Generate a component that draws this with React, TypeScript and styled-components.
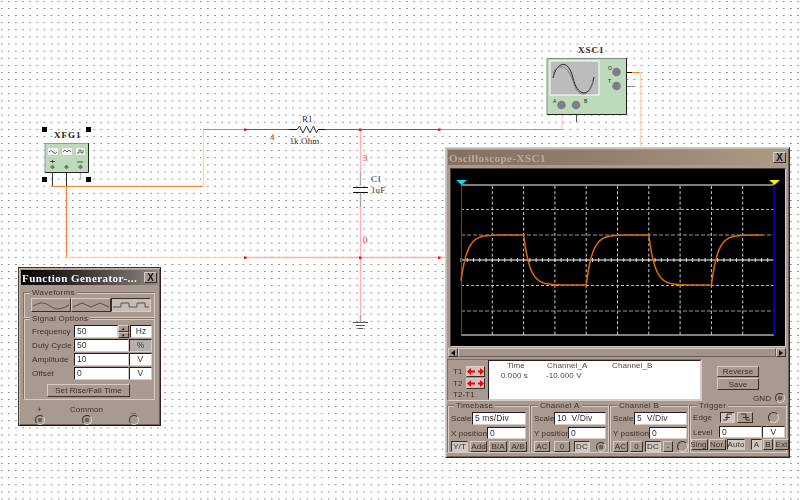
import React from "react";
import styled, { createGlobalStyle } from "styled-components";

const Global = createGlobalStyle`
  html, body { margin: 0; padding: 0; background: #fff; overflow: hidden; }
  * { box-sizing: border-box; }
`;

const PANEL = "#a89a91";
const LIGHT = "#d6ccc5";
const DARK = "#3c2c26";
const SANS = `"Liberation Sans", Arial, sans-serif`;
const SERIF = `"Liberation Serif", "Times New Roman", serif`;

const Stage = styled.div`
  position: relative;
  width: 800px;
  height: 500px;
  overflow: hidden;
  background-color: #fff;
  background-image: radial-gradient(circle at 1.6px 1.4px, #777 0, #888 0.6px, transparent 0.9px);
  background-size: 7.11px 7.11px;
  font-family: ${SANS};
  font-size: 8px;
  letter-spacing: 0.1px;
  color: #3a302c;
`;

const Circuit = styled.svg`
  position: absolute;
  inset: 0;
  width: 800px;
  height: 500px;
`;

const Window = styled.div<{ $x: number; $y: number; $w: number; $h: number; $active?: boolean }>`
  position: absolute;
  left: ${(p) => p.$x}px;
  top: ${(p) => p.$y}px;
  width: ${(p) => p.$w}px;
  height: ${(p) => p.$h}px;
  background: ${PANEL};
  border: 1px solid;
  border-color: ${(p) => (p.$active ? "#3a2e2a #2c2220 #1c1210 #4a3c36" : `${LIGHT} #2c2220 #2c2220 ${LIGHT}`)};
  box-shadow: inset 1px 1px 0 #c4b8b0, inset -1px -1px 0 #6e5f58;
  padding: 2px;
  display: flex;
  flex-direction: column;
  filter: blur(0.25px);
`;

const TitleBar = styled.div<{ $active?: boolean }>`
  height: 15px;
  flex: none;
  display: flex;
  align-items: center;
  justify-content: space-between;
  padding: 0 1px 0 1px;
  font-family: ${SERIF};
  font-weight: bold;
  white-space: nowrap;
  background: ${(p) =>
    p.$active
      ? "linear-gradient(90deg, #000 0%, #3a3432 45%, #8d8582 100%)"
      : "linear-gradient(90deg, #85705f 0%, #94806f 50%, #ab9c84 100%)"};
  color: ${(p) => (p.$active ? "#fff" : "#b8aca0")};
  font-size: 11px;
  letter-spacing: 0.45px;
`;

const CloseButton = styled.div`
  width: 13px;
  height: 11px;
  background: ${PANEL};
  border: 1px solid;
  border-color: ${LIGHT} ${DARK} ${DARK} ${LIGHT};
  color: #111;
  font: bold 10px/9px ${SANS};
  letter-spacing: 0;
  text-align: center;
`;

/* ---- shared controls ---- */
const Group = styled.div<{ $w?: number; $h?: number; $top?: number }>`
  position: relative;
  width: ${(p) => (p.$w ? `${p.$w}px` : "auto")};
  height: ${(p) => (p.$h ? `${p.$h}px` : "auto")};
  margin-top: ${(p) => p.$top ?? 0}px;
  flex: none;
  border: 1px solid;
  border-color: #7e7068 ${LIGHT} ${LIGHT} #7e7068;
  box-shadow: inset 1px 1px 0 ${LIGHT};
`;

const Legend = styled.span<{ $x?: number }>`
  position: absolute;
  left: ${(p) => p.$x ?? 8}px;
  top: -5px;
  padding: 0 2px;
  background: ${PANEL};
  line-height: 9px;
  white-space: nowrap;
  letter-spacing: 0.3px;
`;

const Row = styled.div<{ $gap?: number; $top?: number; $left?: number }>`
  display: flex;
  align-items: center;
  gap: ${(p) => p.$gap ?? 0}px;
  margin-top: ${(p) => p.$top ?? 0}px;
  margin-left: ${(p) => p.$left ?? 0}px;
`;

const Label = styled.span<{ $w?: number }>`
  width: ${(p) => (p.$w ? `${p.$w}px` : "auto")};
  flex: none;
  white-space: nowrap;
`;

const Field = styled.div<{ $w: number; $h?: number; $center?: boolean; $grey?: boolean }>`
  width: ${(p) => p.$w}px;
  height: ${(p) => p.$h ?? 13}px;
  flex: none;
  background: ${(p) => (p.$grey ? "#b4b0ae" : "#fff")};
  border: 1px solid;
  border-color: #2e1c1a #d6ccc5 #d6ccc5 #2e1c1a;
  padding: 0 2px;
  line-height: ${(p) => (p.$h ?? 13) - 2}px;
  font-size: 8.5px;
  color: #3a3230;
  white-space: pre;
  text-align: ${(p) => (p.$center ? "center" : "left")};
`;

const Btn = styled.div<{ $w: number; $h?: number; $on?: boolean }>`
  width: ${(p) => p.$w}px;
  height: ${(p) => p.$h ?? 11}px;
  flex: none;
  display: flex;
  align-items: center;
  justify-content: center;
  white-space: nowrap;
  font-size: 8px;
  background: ${(p) => (p.$on ? "#cfc8c2" : PANEL)};
  border: 1px solid;
  border-color: ${(p) =>
    p.$on ? `${DARK} ${LIGHT} ${LIGHT} ${DARK}` : `${LIGHT} ${DARK} ${DARK} ${LIGHT}`};
`;

const Terminal = styled.div<{ $filled?: boolean; $size?: number }>`
  width: ${(p) => p.$size ?? 10}px;
  height: ${(p) => p.$size ?? 10}px;
  flex: none;
  border-radius: 50%;
  border: 1px solid;
  border-color: #3a2e2a #ddd6d0 #ddd6d0 #3a2e2a;
  background: ${(p) =>
    p.$filled ? `radial-gradient(circle, #6e5f58 0 2px, #a89a91 2.5px)` : PANEL};
`;

/* ---- function generator ---- */
const FgBody = styled.div`
  flex: 1;
  padding: 7px 2px 0 2px;
  display: flex;
  flex-direction: column;
`;

const WaveButton = styled.div<{ $on?: boolean }>`
  width: 40px;
  height: 14px;
  flex: none;
  background: ${(p) => (p.$on ? "#c6bdb6" : PANEL)};
  border: 1px solid;
  border-color: ${(p) =>
    p.$on ? `${DARK} ${LIGHT} ${LIGHT} ${DARK}` : `${LIGHT} ${DARK} ${DARK} ${LIGHT}`};
  svg { display: block; }
`;

const Spinner = styled.div`
  width: 11px;
  height: 13px;
  flex: none;
  display: flex;
  flex-direction: column;
`;

const SpinPart = styled.div`
  flex: 1;
  background: ${PANEL};
  border: 1px solid;
  border-color: ${LIGHT} ${DARK} ${DARK} ${LIGHT};
  font-size: 5px;
  line-height: 4px;
  text-align: center;
  color: #111;
`;

const UnitGap = styled.div`
  margin-left: 1px;
  display: flex;
`;

const TerminalRow = styled.div`
  display: grid;
  grid-template-columns: 47px 47px 47px;
  justify-items: center;
  margin-top: 5px;
  margin-left: -7px;
  row-gap: 1px;
`;

/* ---- scope ---- */
const ScreenFrame = styled.div`
  margin: 3px 1px 0 2px;
  height: 179px;
  flex: none;
  border: 1px solid;
  border-color: #4e403a #d6ccc5 #d6ccc5 #4e403a;
  background: #000;
  svg { display: block; }
`;

const ScrollBar = styled.div`
  margin: 1px 1px 0 0;
  height: 9px;
  flex: none;
  display: flex;
  background: #b4a8a0;
`;

const ScrollArrow = styled.div`
  width: 10px;
  flex: none;
  background: ${PANEL};
  border: 1px solid;
  border-color: ${LIGHT} ${DARK} ${DARK} ${LIGHT};
  display: flex;
  align-items: center;
  justify-content: center;
`;

const ScrollThumb = styled.div`
  flex: 1;
  background: #a2948b;
  border: 1px solid;
  border-color: ${LIGHT} #6e5f58 #6e5f58 ${LIGHT};
`;

const ReadoutRow = styled.div`
  margin: 2px 0 0 -1px;
  flex: none;
  height: 44px;
  display: flex;
`;

const ReadoutFrame = styled.div`
  width: 255px;
  height: 42px;
  flex: none;
  display: flex;
  border: 1px solid;
  border-color: #7e7068 ${LIGHT} ${LIGHT} #7e7068;
`;

const CursorColumn = styled.div`
  width: 40px;
  flex: none;
  display: flex;
  flex-direction: column;
  padding: 6px 0 0 5px;
  gap: 1px;
`;

const ArrowButton = styled.div`
  width: 19px;
  height: 11px;
  flex: none;
  background: #cfc5be;
  border: 1px solid;
  border-color: ${LIGHT} ${DARK} ${DARK} ${LIGHT};
  svg { display: block; }
`;

const Readout = styled.div`
  flex: 1;
  background: #fff;
  border: 1px solid;
  border-color: #2e1c1a #d6ccc5 #d6ccc5 #2e1c1a;
  display: grid;
  grid-template-columns: 57px 65px 1fr;
  grid-auto-rows: 9.5px;
  line-height: 9px;
  color: #504642;
`;

const ReadoutCell = styled.span<{ $pad: number }>`
  padding-left: ${(p) => p.$pad}px;
  white-space: nowrap;
`;

const ActionColumn = styled.div`
  flex: 1;
  display: flex;
  flex-direction: column;
  padding: 7px 0 0 15px;
  gap: 1px;
`;

const GndRow = styled.div`
  display: flex;
  align-items: center;
  gap: 4px;
  margin-top: 2px;
  padding-left: 36px;
`;

const ControlRow = styled.div`
  margin: 2px 0 0 -1px;
  flex: 1;
  display: flex;
`;

const GroupBody = styled.div`
  display: flex;
  flex-direction: column;
  padding: 6px 2px 0 3px;
`;

function seg(x0: number, x1: number, from: number, target: number) {
  const pts: string[] = [];
  for (let x = x0; x <= x1 + 0.001; x += 1.5) {
    const y = target + (from - target) * Math.exp(-(x - x0) / 6.26);
    pts.push(`${x.toFixed(1)} ${y.toFixed(1)}`);
  }
  return pts;
}

function tracePath() {
  const cuts = [461, 523.6, 586.2, 648.8, 711.4, 763];
  let y = 281;
  let out: string[] = [];
  cuts.slice(0, -1).forEach((c, i) => {
    const target = i % 2 === 0 ? 235 : 285;
    const pts = seg(c, cuts[i + 1], y, target);
    out = out.concat(pts);
    y = target;
  });
  return "M" + out.join("L");
}

const ScopeGrid = () => {
  const xs = Array.from({ length: 9 }, (_, i) => 492.3 + i * 31.3);
  const ticks = Array.from({ length: 50 }, (_, i) => 461 + i * 6.26);
  return (
    <svg width={333} height={177} viewBox="451 169 333 177">
      {xs.map((x) => (
        <line key={x} x1={x} x2={x} y1={186} y2={335} stroke="#cfcfcf" strokeDasharray="3 2.2" />
      ))}
      <line x1={461} x2={774} y1={209.5} y2={209.5} stroke="#a8a8a8" strokeDasharray="3 2" />
      <line x1={461} x2={774} y1={235} y2={235} stroke="#999" strokeDasharray="4 2" />
      <line x1={461} x2={774} y1={285.5} y2={285.5} stroke="#bbb" strokeDasharray="3 2" />
      <line x1={461} x2={774} y1={311} y2={311} stroke="#999" strokeDasharray="4 2" />
      <line x1={461} x2={774} y1={185} y2={185} stroke="#a8a8a8" strokeWidth={1.5} />
      <line x1={461} x2={774} y1={335} y2={335} stroke="#fff" strokeWidth={1.2} />
      <line x1={461} x2={774} y1={260} y2={260} stroke="#fff" strokeWidth={1.2} />
      {ticks.map((x) => (
        <line key={x} x1={x} x2={x} y1={258} y2={262} stroke="#ddd" />
      ))}
      <line x1={461.5} x2={461.5} y1={185} y2={335} stroke="#e01010" />
      <line x1={774} x2={774} y1={185} y2={335} stroke="#0000d0" strokeWidth={1.6} />
      <line x1={461.5} x2={461.5} y1={280} y2={285} stroke="#109010" />
      <polygon points="456,180 467,180 461.5,185" fill="#00e0f0" />
      <polygon points="769,180 780,180 774.5,185" fill="#f0f000" />
      <path d={tracePath()} fill="none" stroke="#dc6c00" strokeWidth={1.5} />
    </svg>
  );
};

const Arrows = () => (
  <svg width={17} height={9} viewBox="0 0 17 9">
    <path d="M2 4.5H8M11 4.5H15" stroke="#f00000" strokeWidth={2} fill="none" />
    <polygon points="0,4.5 4,1 4,8" fill="#f00000" />
    <polygon points="17,4.5 13,1 13,8" fill="#f00000" />
  </svg>
);

const Wave = ({ d }: { d: string }) => (
  <svg width={38} height={12} viewBox="0 0 38 12">
    <path d={d} fill="none" stroke="#5a4e4a" />
  </svg>
);

const CircuitDrawing = () => {
  const pale = "#ffd0c2";
  const orange = "#f88030";
  const pink = "#ffb0b0";
  const red = "#f02020";
  const handles: [number, number][] = [[44, 129], [88, 129], [44, 179], [88, 179]];
  const nodes: [number, number][] = [[245, 129], [360, 129], [439, 129], [245, 257], [360, 257], [439, 257]];
  return (
    <Circuit viewBox="0 0 800 500">
      {/* wires */}
      <path d="M52.5 186.5H203" stroke={orange} fill="none" />
      <path d="M203.5 186V129" stroke={pale} fill="none" strokeWidth={1.4} />
      <path d="M203 129.5H245M439 129.5H562" stroke={orange} fill="none" />
      <path d="M245 129.5H289M325 129.5H439" stroke={red} fill="none" />
      <path d="M562 129V111" stroke={pale} fill="none" strokeWidth={1.4} />
      <path d="M562 111V104" stroke="#999" fill="none" />
      <path d="M576.5 110V122" stroke="#555" fill="none" />
      <path d="M622 72.5H632" stroke="#111" fill="none" />
      <path d="M632 72.5H641" stroke={orange} fill="none" />
      <path d="M640.5 72V148" stroke={pale} fill="none" strokeWidth={1.4} />
      <path d="M622 86.5H634" stroke="#888" fill="none" />
      <path d="M52.5 172V186" stroke="#333" fill="none" />
      <path d="M66.5 172V186" stroke="#333" fill="none" />
      <path d="M66.5 186V257" stroke={orange} fill="none" />
      <path d="M80.5 172V180" stroke="#bbb" fill="none" strokeWidth={1.4} />
      <path d="M66 257.5H245" stroke={pale} fill="none" strokeWidth={1.4} />
      <path d="M245 257.5H445" stroke={pink} fill="none" strokeWidth={1.4} />
      <path d="M360.5 129V172M360.5 207V315" stroke={pink} fill="none" strokeWidth={1.4} />
      <path d="M360.5 172V186M360.5 193V207M360.5 315V322" stroke="#a8a8a8" fill="none" strokeWidth={1.4} />
      {/* capacitor */}
      <path d="M353 187.5H368M353 192.5H368" stroke="#111" fill="none" strokeWidth={1.2} />
      {/* ground */}
      <path d="M353 322.5H368M356 325.5H365M358 328.5H363" stroke="#555" fill="none" />
      {/* resistor */}
      <path d="M289 129.5H297" stroke="#111" fill="none" />
      <path d="M318 129.5H325" stroke="#111" fill="none" />
      <path d="M297 129.5L299.5 126L303 133L306.5 126L310 133L313.5 126L316.5 133L318 129.5" stroke="#333" fill="none" />
      {nodes.map(([x, y]) => (
        <rect key={`${x}-${y}`} x={x - 1} y={y - 0.5} width={2.5} height={2.5} fill="#f01818" />
      ))}
      {/* labels */}
      <g fontFamily={SERIF} fontSize={9} fill="#333">
        <text x={302} y={122}>R1</text>
        <text x={289.5} y={144} letterSpacing={0.1}>1k Ohm</text>
        <text x={371} y={182}>C1</text>
        <text x={371} y={193}>1uF</text>
      </g>
      <g fontFamily={SERIF} fontSize={9} fill="#f01818">
        <text x={270} y={140}>4</text>
        <text x={363} y={161}>3</text>
        <text x={363} y={243}>0</text>
      </g>
      <g fontFamily={SERIF} fontSize={9} fontWeight="bold" fill="#222" letterSpacing={1}>
        <text x={54} y={138}>XFG1</text>
        <text x={578} y={53}>XSC1</text>
      </g>
      {/* XFG1 instrument */}
      {handles.map(([x, y]) => (
        <rect key={`${x}-${y}`} x={x - 2} y={y - 2} width={5} height={5} fill="#000" />
      ))}
      <rect x={45} y={143} width={43} height={29} fill="#bddabb" />
      <path d="M45 172.5V143.5H88" stroke="#999" fill="none" />
      <path d="M45 172.5H88.5V143" stroke="#222" fill="none" />
      <rect x={48} y={148} width={10} height={7} fill="#f4f4f4" />
      <rect x={62} y={148} width={10} height={7} fill="#f4f4f4" />
      <rect x={76} y={148} width={9} height={7} fill="#f4f4f4" />
      <path d="M49 152q2 -3 4 0t4 0M63 152l2 -2l2 2l2 -2l2 2M77 153h2v-3h2v3h2v-3" fill="none" stroke="#444" strokeWidth={0.8} />
      <path d="M50 161.5H55M52.5 160V163M77 162H83" stroke="#333" fill="none" strokeWidth={0.8} />
      {[52.5, 66.5, 80.5].map((x) => (
        <polygon key={x} points={`${x - 2.5},167 ${x},164.5 ${x + 2.5},167 ${x},169.5`} fill="#777" />
      ))}
      {/* XSC1 instrument */}
      <rect x={547} y={58} width={79} height={56} fill="#bddabb" />
      <path d="M547 114.5V58.5H626" stroke="#888" fill="none" />
      <path d="M547 114.5H626.5V58" stroke="#222" fill="none" />
      <rect x={550} y={61} width={49} height={34} fill="#bcbcbc" stroke="#fff" />
      <path d="M553 78C556 63 568 57 573 78C577 96 590 100 594 77" fill="none" stroke="#222" />
      <path d="M553 73C556 66 567 60 574 84C579 99 590 97 593 80" fill="none" stroke="#777" />
      {[[561.5, 105], [576, 105], [616.5, 72], [616.5, 86]].map(([x, y]) => (
        <circle key={x + y} cx={x} cy={y} r={4.3} fill="#7e7e88" />
      ))}
      <g fontFamily={SANS} fontSize={5} fill="#222">
        <text x={553} y={103}>A</text>
        <text x={584} y={103}>B</text>
        <text x={608} y={70}>O</text>
        <text x={608} y={83}>T</text>
      </g>
    </Circuit>
  );
};

const FunctionGenerator = () => (
  <Window $x={18} $y={267} $w={143} $h={159} $active>
    <TitleBar $active>
      <span>Function Generator-...</span>
      <CloseButton>X</CloseButton>
    </TitleBar>
    <FgBody>
      <Group $w={132} $h={26}>
        <Legend $x={6}>Waveforms</Legend>
        <Row $left={7} $top={5}>
          <WaveButton><Wave d="M1 7C8 3 12 3 18 7C24 11 28 11 37 6" /></WaveButton>
          <WaveButton><Wave d="M1 8L10 4L19 8L28 4L37 8" /></WaveButton>
          <WaveButton $on><Wave d="M1 8H9V4H17V8H25V4H33V8H37" /></WaveButton>
        </Row>
      </Group>
      <Group $w={132} $h={82}>
        <Legend $x={6}>Signal Options</Legend>
        <Row $left={8} $top={6}>
          <Label $w={42}>Frequency</Label>
          <Field $w={44}>50</Field>
          <Spinner><SpinPart>▴</SpinPart><SpinPart>▾</SpinPart></Spinner>
          <UnitGap><Field $w={22} $center>Hz</Field></UnitGap>
        </Row>
        <Row $left={8} $top={1}>
          <Label $w={42}>Duty Cycle</Label>
          <Field $w={55}>50</Field>
          <Field $w={23} $center $grey>%</Field>
        </Row>
        <Row $left={8} $top={1}>
          <Label $w={42}>Amplitude</Label>
          <Field $w={55}>10</Field>
          <Field $w={23} $center>V</Field>
        </Row>
        <Row $left={8} $top={1}>
          <Label $w={42}>Offset</Label>
          <Field $w={55}>0</Field>
          <Field $w={23} $center>V</Field>
        </Row>
        <Row $left={23} $top={4}>
          <Btn $w={83} $h={13}>Set Rise/Fall Time</Btn>
        </Row>
      </Group>
      <TerminalRow>
        <Label>+</Label>
        <Label>Common</Label>
        <Label>_</Label>
        <Terminal $filled />
        <Terminal $filled />
        <Terminal />
      </TerminalRow>
    </FgBody>
  </Window>
);

const Scope = () => (
  <Window $x={445} $y={147} $w={345} $h={311}>
    <TitleBar>
      <span>Oscilloscope-XSC1</span>
      <CloseButton>X</CloseButton>
    </TitleBar>
    <ScreenFrame><ScopeGrid /></ScreenFrame>
    <ScrollBar>
      <ScrollArrow>
        <svg width={4} height={6}><polygon points="4,0 4,6 0,3" fill="#111" /></svg>
      </ScrollArrow>
      <ScrollThumb />
      <ScrollArrow>
        <svg width={4} height={6}><polygon points="0,0 0,6 4,3" fill="#111" /></svg>
      </ScrollArrow>
    </ScrollBar>
    <ReadoutRow>
      <ReadoutFrame>
        <CursorColumn>
          <Row $gap={2}><Label $w={11}>T1</Label><ArrowButton><Arrows /></ArrowButton></Row>
          <Row $gap={2}><Label $w={11}>T2</Label><ArrowButton><Arrows /></ArrowButton></Row>
          <Label>T2-T1</Label>
        </CursorColumn>
        <Readout>
          <ReadoutCell $pad={18}>Time</ReadoutCell>
          <ReadoutCell $pad={1}>Channel_A</ReadoutCell>
          <ReadoutCell $pad={1}>Channel_B</ReadoutCell>
          <ReadoutCell $pad={12}>0.000 s</ReadoutCell>
          <ReadoutCell $pad={0}>-10.000 V</ReadoutCell>
          <span />
        </Readout>
      </ReadoutFrame>
      <ActionColumn>
        <Btn $w={42} $h={11}>Reverse</Btn>
        <Btn $w={42} $h={12}>Save</Btn>
        <GndRow><Label>GND</Label><Terminal $filled /></GndRow>
      </ActionColumn>
    </ReadoutRow>
    <ControlRow>
      <Group $w={83} $h={48}>
        <Legend $x={6}>Timebase</Legend>
        <GroupBody>
          <Row $gap={1}><Label $w={20}>Scale</Label><Field $w={54} $h={13}>5 ms/Div</Field></Row>
          <Row $gap={1} $top={2}><Label $w={35}>X position</Label><Field $w={39} $h={12}>0</Field></Row>
          <Row $gap={2} $top={2}>
            <Btn $w={17} $on>Y/T</Btn><Btn $w={17}>Add</Btn><Btn $w={18}>B/A</Btn><Btn $w={18}>A/B</Btn>
          </Row>
        </GroupBody>
      </Group>
      <Group $w={79} $h={48}>
        <Legend $x={7}>Channel A</Legend>
        <GroupBody>
          <Row $gap={1}><Label $w={19}>Scale</Label><Field $w={52} $h={13}>10  V/Div</Field></Row>
          <Row $gap={1} $top={2}><Label $w={33}>Y position</Label><Field $w={38} $h={12}>0</Field></Row>
          <Row $gap={4} $top={2}>
            <Btn $w={16}>AC</Btn><Btn $w={16}>0</Btn><Btn $w={16} $on>DC</Btn><Terminal $filled $size={10} style={{ marginLeft: 2 }} />
          </Row>
        </GroupBody>
      </Group>
      <Group $w={80} $h={48}>
        <Legend $x={7}>Channel B</Legend>
        <GroupBody>
          <Row $gap={1}><Label $w={20}>Scale</Label><Field $w={53} $h={13}>5  V/Div</Field></Row>
          <Row $gap={1} $top={2}><Label $w={35}>Y position</Label><Field $w={38} $h={12}>0</Field></Row>
          <Row $gap={2} $top={2}>
            <Btn $w={15}>AC</Btn><Btn $w={13}>0</Btn><Btn $w={16} $on>DC</Btn><Btn $w={10}>-</Btn><Terminal $size={11} style={{ marginLeft: 2 }} />
          </Row>
        </GroupBody>
      </Group>
      <Group $w={98} $h={48}>
        <Legend $x={7}>Trigger</Legend>
        <GroupBody>
          <Row>
            <Label $w={27}>Edge</Label>
            <Btn $w={15} $on>
              <svg width={9} height={9}><path d="M0 7H4V1H9M2 4.5H7" fill="none" stroke="#333" /></svg>
            </Btn>
            <Btn $w={16} $h={11} style={{ marginLeft: 2 }}>
              <svg width={9} height={9}><path d="M0 1H5V7H9M2 4.5H8" fill="none" stroke="#333" /></svg>
            </Btn>
            <Terminal $size={11} style={{ marginLeft: 15 }} />
          </Row>
          <Row $top={3}>
            <Label $w={26}>Level</Label>
            <Field $w={43} $h={12}>0</Field>
            <Field $w={23} $h={12} $center>V</Field>
          </Row>
          <Row $top={1} style={{ marginLeft: -2 }} $gap={1}>
            <Btn $w={17}>Sing.</Btn><Btn $w={17}>Nor.</Btn><Btn $w={18} $on>Auto</Btn>
            <Btn $w={11} $on style={{ marginLeft: 5 }}>A</Btn><Btn $w={10}>B</Btn><Btn $w={15}>Ext</Btn>
          </Row>
        </GroupBody>
      </Group>
    </ControlRow>
  </Window>
);

export default function App() {
  return (
    <>
      <Global />
      <Stage>
        <CircuitDrawing />
        <FunctionGenerator />
        <Scope />
      </Stage>
    </>
  );
}
